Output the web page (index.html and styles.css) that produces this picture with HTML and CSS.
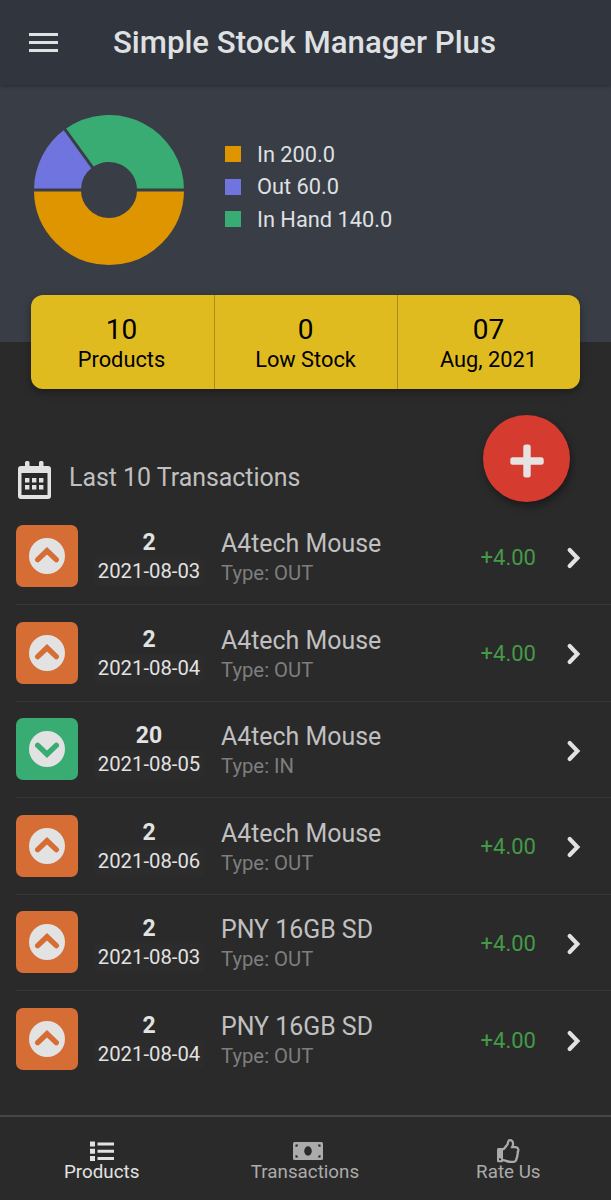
FILE: index.html
```html
<!DOCTYPE html>
<html lang="en">
<head>
    <meta charset="UTF-8">
    <meta name="viewport" content="width=device-width, initial-scale=1.0">
    <title>Simple Stock Manager Plus</title>
    <link rel="stylesheet" href="styles.css">
</head>
<body>
    <!-- icons used more than once -->
    <svg class="sprite">
        <symbol id="icon-up" viewBox="0 0 36 36">
            <circle cx="18" cy="18" r="18" fill="#e2e2e2"/>
            <path d="M8.7 21.6 L18 12.7 L27.3 21.6" fill="none" stroke="currentColor" stroke-width="5.4" stroke-linecap="round"/>
        </symbol>
        <symbol id="icon-down" viewBox="0 0 36 36">
            <circle cx="18" cy="18" r="18" fill="#e2e2e2"/>
            <path d="M8.7 14.4 L18 23.3 L27.3 14.4" fill="none" stroke="currentColor" stroke-width="5.4" stroke-linecap="round"/>
        </symbol>
        <symbol id="icon-next" viewBox="0 0 14 22">
            <path d="M2.7 3 L10.4 11 L2.7 19" fill="none" stroke="#e2e2e2" stroke-width="4.1" stroke-linecap="round"/>
        </symbol>
    </svg>

    <header class="toolbar">
        <button class="menu-button" aria-label="Menu">
            <svg width="29" height="20" viewBox="0 0 29 20"><path d="M0 1.5H29M0 9.5H29M0 17.5H29" stroke="#dfe0e2" stroke-width="3"/></svg>
        </button>
        <h1>Simple Stock Manager Plus</h1>
    </header>

    <section class="summary">
        <svg class="donut" width="150" height="150" viewBox="0 0 150 150">
            <g fill="none" stroke-width="47">
                <path d="M126.5 75 A51.5 51.5 0 0 1 23.5 75" stroke="#df9500"/>
                <path d="M23.5 75 A51.5 51.5 0 0 1 44.73 33.34" stroke="#7074df"/>
                <path d="M44.73 33.34 A51.5 51.5 0 0 1 126.5 75" stroke="#38ac72"/>
            </g>
            <path d="M0 75H50M100 75H150M29.5 12.4L60.3 54.8" stroke="#393d46" stroke-width="3"/>
        </svg>
        <ul class="legend">
            <li class="in">In 200.0</li>
            <li class="out">Out 60.0</li>
            <li class="hand">In Hand 140.0</li>
        </ul>
    </section>

    <section class="stats">
        <div class="stat"><strong>10</strong><span>Products</span></div>
        <div class="stat"><strong>0</strong><span>Low Stock</span></div>
        <div class="stat"><strong>07</strong><span>Aug, 2021</span></div>
    </section>

    <main>
        <div class="list-header">
            <svg width="34" height="38" viewBox="0 0 34 38">
                <path d="M8 1.5Q8 0 9.5 0H11Q12.5 0 12.5 1.5V5H22V1.5Q22 0 23.500 0H25Q26.500 0 26.500 1.5V5H31Q34 5 34 8V35Q34 38 31 38H4Q1 38 1 35V8Q1 5 4 5H8ZM4.500 12V34H30.500V12Z" fill="#e2e2e2" fill-rule="evenodd"/>
                <path d="M8 17h4.400v4.400h-4.400zM15 17h4.400v4.400h-4.400zM22 17h4.400v4.400h-4.400zM8 24h4.400v4.400h-4.400zM15 24h4.400v4.400h-4.400zM22 24h4.400v4.400h-4.400z" fill="#e2e2e2"/>
            </svg>
            <h2>Last 10 Transactions</h2>
            <button class="add-button" aria-label="Add">
                <svg width="34" height="34" viewBox="0 0 34 34" fill="#e6e2e2">
                    <rect x="13.3" y="0.5" width="7.4" height="33" rx="2.5"/>
                    <rect x="0.3" y="13.3" width="33.4" height="7.4" rx="2.5"/>
                </svg>
            </button>
        </div>

        <ul class="transactions">
            <li>
                <div class="badge out"><svg><use href="#icon-up"/></svg></div>
                <div class="when"><b>2</b><span>2021-08-03</span></div>
                <div class="item"><h3>A4tech Mouse</h3><p>Type: OUT</p></div>
                <div class="amount">+4.00</div>
                <svg class="next"><use href="#icon-next"/></svg>
            </li>
            <li>
                <div class="badge out"><svg><use href="#icon-up"/></svg></div>
                <div class="when"><b>2</b><span>2021-08-04</span></div>
                <div class="item"><h3>A4tech Mouse</h3><p>Type: OUT</p></div>
                <div class="amount">+4.00</div>
                <svg class="next"><use href="#icon-next"/></svg>
            </li>
            <li>
                <div class="badge in"><svg><use href="#icon-down"/></svg></div>
                <div class="when"><b>20</b><span>2021-08-05</span></div>
                <div class="item"><h3>A4tech Mouse</h3><p>Type: IN</p></div>
                <div class="amount"></div>
                <svg class="next"><use href="#icon-next"/></svg>
            </li>
            <li>
                <div class="badge out"><svg><use href="#icon-up"/></svg></div>
                <div class="when"><b>2</b><span>2021-08-06</span></div>
                <div class="item"><h3>A4tech Mouse</h3><p>Type: OUT</p></div>
                <div class="amount">+4.00</div>
                <svg class="next"><use href="#icon-next"/></svg>
            </li>
            <li>
                <div class="badge out"><svg><use href="#icon-up"/></svg></div>
                <div class="when"><b>2</b><span>2021-08-03</span></div>
                <div class="item"><h3>PNY 16GB SD</h3><p>Type: OUT</p></div>
                <div class="amount">+4.00</div>
                <svg class="next"><use href="#icon-next"/></svg>
            </li>
            <li>
                <div class="badge out"><svg><use href="#icon-up"/></svg></div>
                <div class="when"><b>2</b><span>2021-08-04</span></div>
                <div class="item"><h3>PNY 16GB SD</h3><p>Type: OUT</p></div>
                <div class="amount">+4.00</div>
                <svg class="next"><use href="#icon-next"/></svg>
            </li>
        </ul>
    </main>

    <nav class="tabs">
        <a class="tab active">
            <svg width="24" height="24" viewBox="0 0 24 24"><path d="M0 2.5h5v5h-5zM0 9.7h5v5h-5zM0 17h5v5h-5zM7.5 3.5h16.500v3h-16.500zM7.5 10.7h16.500v3h-16.500zM7.5 18h16.500v3h-16.500z" fill="currentColor"/></svg>
            <span>Products</span>
        </a>
        <a class="tab">
            <svg class="cash" width="30" height="24" viewBox="0 0 30 24">
                <rect y="3" width="30" height="18" rx="1.5" fill="currentColor"/>
                <ellipse cx="15" cy="12" rx="3.8" ry="4.7" fill="#2a2a2a"/>
                <path d="M2.5 5.5h2.5a2.5 2.5 0 0 1-2.5 2.5zM27.5 5.5v2.5a2.5 2.5 0 0 1-2.5-2.5zM2.5 18.5v-2.5a2.5 2.5 0 0 1 2.5 2.5zM27.5 18.5h-2.5a2.5 2.5 0 0 1 2.5-2.5z" fill="#2a2a2a"/>
            </svg>
            <span>Transactions</span>
        </a>
        <a class="tab">
            <svg width="23" height="24" viewBox="0 0 490 512"><path d="M466.27 286.69C475.04 271.84 480 256 480 236.85c0-44.015-37.218-85.58-85.82-85.58H357.7c4.92-12.81 8.85-28.13 8.85-46.54C366.55 31.936 328.86 0 271.28 0c-61.607 0-58.093 94.933-71.76 108.6-22.747 22.747-49.615 66.447-68.76 83.4H32c-17.673 0-32 14.327-32 32v240c0 17.673 14.327 32 32 32h64c14.893 0 27.408-10.174 30.978-23.95 44.509 1.001 75.06 39.94 177.802 39.94h22.22c77.117 0 111.986-39.423 112.94-95.33 13.319-18.425 20.299-43.122 17.34-66.99 9.854-18.452 13.664-40.343 8.99-62.99zm-61.75 53.83c12.56 21.13 1.26 49.41-13.94 57.57 7.7 48.78-17.608 65.9-53.12 65.9h-37.82c-71.639 0-118.029-37.82-171.64-37.82V240h10.92c28.36 0 67.98-70.89 94.54-97.46 28.36-28.36 18.91-75.63 37.82-94.54 47.27 0 47.27 32.98 47.27 56.73 0 39.17-28.36 56.72-28.36 94.54h103.99c21.11 0 37.73 18.91 37.82 37.82.09 18.9-12.82 37.81-22.27 37.81 13.489 14.555 16.371 45.236-5.21 65.62zM88 432c0 13.255-10.745 24-24 24s-24-10.745-24-24 10.745-24 24-24 24 10.745 24 24z" fill="currentColor"/></svg>
            <span>Rate Us</span>
        </a>
    </nav>
</body>
</html>
```
FILE: styles.css
```css
* {
    box-sizing: border-box;
}
body {
    margin: 0;
    height: 1200px;
    display: flex;
    flex-direction: column;
    background-color: #2a2a2a;
    color: #e2e2e2;
    font-family: Roboto, "Liberation Sans", sans-serif;
    overflow: hidden;
}
h1, h2, h3, p, ul {
    margin: 0;
    padding: 0;
    font-weight: 400;
}
ul {
    list-style: none;
}
button {
    border: none;
    padding: 0;
    background: none;
}
svg {
    display: block;
}
.sprite {
    display: none;
}

/* header */
.toolbar {
    height: 85px;
    flex: none;
    display: flex;
    align-items: center;
    gap: 55px;
    padding-left: 29px;
    background-color: #31353d;
    box-shadow: 0 1px 4px rgba(0, 0, 0, 0.35);
    z-index: 1;
}
.toolbar h1 {
    padding-top: 1px;
    font-size: 31.15px;
    font-weight: 500;
    line-height: 36px;
    color: #dfe0e2;
    white-space: nowrap;
}
.summary {
    height: 257px;
    flex: none;
    display: flex;
    align-items: flex-start;
    gap: 41px;
    padding: 30px 0 0 34px;
    background-color: #393d46;
}
.legend {
    padding-top: 23px;
}
.legend li {
    display: flex;
    align-items: center;
    gap: 16px;
    height: 32.6px;
    font-size: 21.8px;
    color: #dfe0e2;
}
.legend li::before {
    content: "";
    width: 16px;
    height: 16px;
    background-color: #df9500;
}
.legend .out::before {
    background-color: #7074df;
}
.legend .hand::before {
    background-color: #38ac72;
}

/* yellow counters */
.stats {
    display: flex;
    flex: none;
    height: 94px;
    margin: -47px 31px 0;
    border-radius: 12px;
    background-color: #dfbb1f;
    box-shadow: 0 3px 8px rgba(0, 0, 0, 0.35);
    color: #000;
    text-align: center;
}
.stat {
    flex: 1;
    padding-top: 18px;
    padding-right: 2px;
}
.stat + .stat {
    border-left: 1px solid #a88d1c;
    padding-right: 1px;
}
.stat strong, .stat span {
    display: block;
}
.stat strong {
    font-size: 28px;
    line-height: 33px;
    font-weight: 400;
}
.stat span {
    font-size: 21.8px;
    line-height: 27px;
}

/* transactions */
.list-header {
    display: flex;
    align-items: flex-start;
    height: 119.5px;
    padding: 0 41px 0 17px;
}
.list-header > svg {
    margin: 71.5px 18px 0 0;
}
.list-header h2 {
    flex: 1;
    margin-top: 73px;
    font-size: 24.9px;
    line-height: 32px;
    color: #c0c0c0;
}
.add-button {
    width: 87px;
    height: 87px;
    border-radius: 50%;
    display: flex;
    align-items: center;
    justify-content: center;
    padding-top: 4px;
    margin-top: 26px;
    background-color: #d63b30;
    box-shadow: 2px 4px 8px rgba(0, 0, 0, 0.4);
}
.transactions li {
    display: flex;
    align-items: center;
    height: 96.5px;
    margin-left: 16px;
    padding-right: 30px;
    border-bottom: 1px solid #363636;
}
.transactions li:last-child {
    border-bottom: none;
}
.badge {
    width: 62px;
    height: 62px;
    border-radius: 7px;
    display: flex;
    align-items: center;
    justify-content: center;
}
.badge svg {
    width: 36px;
    height: 36px;
}
.badge.out {
    background-color: #d56d35;
    color: #d56d35;
}
.badge.in {
    background-color: #38ac72;
    color: #38ac72;
}
.when {
    width: 110px;
    margin-left: 16px;
    padding-top: 3px;
    text-align: center;
}
.when b, .when span {
    display: block;
}
.when b {
    font-size: 23px;
    line-height: 28px;
}
.when span {
    font-size: 20.3px;
    line-height: 29px;
    border-radius: 4px;
    background-color: #2c2c2c;
}
.item {
    flex: 1;
    margin-left: 17px;
    padding-top: 3px;
}
.item h3 {
    font-size: 24.9px;
    line-height: 31px;
    color: #c0c0c0;
}
.item p {
    font-size: 20.3px;
    line-height: 28px;
    color: #7e7e7e;
}
.amount {
    padding-top: 2px;
    font-size: 22px;
    color: #459a48;
}
.next {
    width: 14px;
    height: 22px;
    margin: 3px 0 0 31px;
}

/* bottom tabs */
.tabs {
    display: flex;
    height: 85px;
    margin-top: auto;
    padding-right: 1px;
    border-top: 2px solid #464646;
}
.tab {
    flex: 1;
    display: flex;
    flex-direction: column;
    align-items: center;
    padding-top: 22px;
    font-size: 18.8px;
    line-height: 20px;
    color: #ababab;
}
.tab span {
    margin-top: -1px;
}
.tab.active {
    color: #e2e2e2;
}
.cash {
    margin-left: 7px;
}
```
